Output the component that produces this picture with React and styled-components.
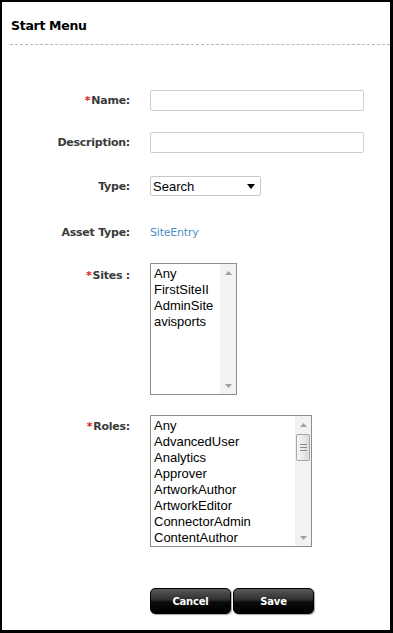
import styled, { createGlobalStyle } from "styled-components";

const Global = createGlobalStyle`
    html, body { margin: 0; padding: 0; background: #ffffff; }
    * { box-sizing: border-box; }
`

const sites = ['Any', 'FirstSiteII', 'AdminSite', 'avisports'];
const roles = ['Any', 'AdvancedUser', 'Analytics', 'Approver', 'ArtworkAuthor', 'ArtworkEditor', 'ConnectorAdmin', 'ContentAuthor'];

function Arrow({ down }) {
    return (
        <svg width="7" height="4" viewBox="0 0 7 4">
            {down ? <path d="M0 0H7L3.5 4Z" fill="#a0a0a0" /> : <path d="M0 4H7L3.5 0Z" fill="#a0a0a0" />}
        </svg>
    )
}

function ListBox({ items, width, thumb }) {
    return (
        <List width={width}>
            <Items>
                {items.map(i => <Item key={i}>{i}</Item>)}
            </Items>
            <Scroll>
                <ArrowBox><Arrow /></ArrowBox>
                <Track>
                    {thumb && (
                        <Thumb>
                            <Grip /><Grip /><Grip />
                        </Thumb>
                    )}
                </Track>
                <ArrowBox><Arrow down /></ArrowBox>
            </Scroll>
        </List>
    )
}

export default function App() {
    return (
        <Frame>
            <Global />
            <Header>
                <h1>Start Menu</h1>
            </Header>
            <Form>
                <Row top={45}>
                    <Label><Star>*</Star>Name:</Label>
                    <Input type="text" />
                </Row>
                <Row top={21}>
                    <Label>Description:</Label>
                    <Input type="text" />
                </Row>
                <Row top={23}>
                    <Label>Type:</Label>
                    <Select>
                        <span>Search</span>
                        <svg width="8" height="5" viewBox="0 0 8 5"><path d="M0 0H8L4 5Z" fill="#000" /></svg>
                    </Select>
                </Row>
                <Row top={30}>
                    <Label>Asset Type:</Label>
                    <Value>SiteEntry</Value>
                </Row>
                <Row top={24} start>
                    <Label pad={6}><Star>*</Star>Sites :</Label>
                    <ListBox items={sites} width={87} />
                </Row>
                <Row top={20} start>
                    <Label pad={5}><Star>*</Star>Roles:</Label>
                    <ListBox items={roles} width={162} thumb />
                </Row>
                <Buttons>
                    <Button>Cancel</Button>
                    <Button>Save</Button>
                </Buttons>
            </Form>
        </Frame>
    )
}

const Frame = styled.div`
    width: 393px;
    height: 633px;
    border: 2px solid #000000;
    border-right-width: 3px;
    border-bottom-width: 3px;
    background: #ffffff;
    font-family: "DejaVu Sans", Verdana, sans-serif;
`

const Header = styled.div`
    margin-left: 8px;
    height: 43px;
    border-bottom: 1px dashed #b8b8b8;
    padding: 16px 0 0 1px;

    h1{
        margin: 0;
        font-size: 12.5px;
        font-weight: bold;
        color: #000000;
        letter-spacing: -0.3px;
    }
`

const Form = styled.div`
    display: flex;
    flex-direction: column;
`

const Row = styled.div`
    display: grid;
    grid-template-columns: 128px 1fr;
    column-gap: 20px;
    align-items: ${props => props.start ? 'start' : 'center'};
    margin-top: ${props => props.top}px;
`

const Label = styled.div`
    text-align: right;
    font-size: 11px;
    font-weight: bold;
    color: #3a3a3a;
    letter-spacing: -0.25px;
    padding-top: ${props => props.pad || 0}px;
`

const Star = styled.span`
    color: #e0191b;
    margin-right: 1px;
`

const Input = styled.input`
    width: 214px;
    height: 21px;
    border: 1px solid #cfcfcf;
    border-radius: 2px;
    outline: none;
    padding: 0 4px;
`

const Select = styled.div`
    width: 111px;
    height: 20px;
    border: 1px solid #c9c9c9;
    border-radius: 2px;
    display: flex;
    align-items: center;
    justify-content: space-between;
    padding: 0 5px 0 2px;
    font-family: "Liberation Sans", Arial, sans-serif;
    font-size: 13px;
    color: #000000;
`

const Value = styled.div`
    font-size: 11px;
    color: #4a8fc6;
    letter-spacing: -0.2px;
`

const List = styled.div`
    width: ${props => props.width}px;
    height: 132px;
    border: 1px solid #8e8e8e;
    display: flex;
    background: #ffffff;
`

const Items = styled.div`
    flex: 1;
    padding: 2px 0 0 3px;
    font-family: "Liberation Sans", Arial, sans-serif;
    font-size: 13px;
    line-height: 16px;
    color: #000000;
    overflow: hidden;
`

const Item = styled.div`
    white-space: nowrap;
`

const Scroll = styled.div`
    width: 16px;
    display: flex;
    flex-direction: column;
    background: #f2f2f2;
`

const ArrowBox = styled.div`
    height: 17px;
    display: flex;
    align-items: center;
    justify-content: center;
`

const Track = styled.div`
    flex: 1;
    padding: 1px 1px 0;
`

const Thumb = styled.div`
    height: 27px;
    border: 1px solid #a6a6a6;
    border-radius: 2px;
    background: linear-gradient(to right, #f6f6f6, #dcdcdc);
    display: flex;
    flex-direction: column;
    align-items: center;
    justify-content: center;
    gap: 2px;
`

const Grip = styled.div`
    width: 7px;
    height: 1px;
    background: #8a8a8a;
`

const Buttons = styled.div`
    display: flex;
    gap: 2px;
    margin: 41px 0 0 148px;
`

const Button = styled.button`
    width: 81px;
    height: 26px;
    border: 1px solid #000000;
    border-radius: 5px;
    background: linear-gradient(to bottom, #5a5a5a 0%, #2e2e2e 45%, #0a0a0a 55%, #000000 100%);
    box-shadow: 1px 1px 1px rgba(0,0,0,0.35);
    color: #ffffff;
    font-family: "DejaVu Sans", Verdana, sans-serif;
    font-size: 10px;
    font-weight: bold;
    letter-spacing: -0.2px;
    padding: 0;
`
